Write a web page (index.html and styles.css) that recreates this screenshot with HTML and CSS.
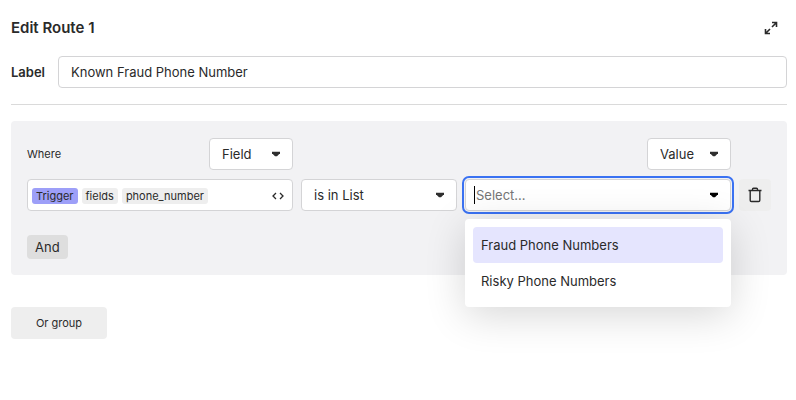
FILE: index.html
```html
<!DOCTYPE html>
<html lang="en">
<head>
<meta charset="utf-8">
<title>Edit Route 1</title>
<link rel="stylesheet" href="styles.css">
</head>
<body>
<main class="editor">
  <header class="header">
    <h1 class="title">Edit Route 1</h1>
    <button class="expand" type="button" aria-label="Expand">
      <svg width="14" height="14" viewBox="0 0 14 14" fill="none" stroke="currentColor" stroke-width="1.6"><path d="M8 1.5h4.5V6M12.5 1.5 8 6M1.5 8v4.5H6M1.5 12.5 6 8"/></svg>
    </button>
  </header>

  <div class="label-row">
    <label class="label" for="route-label">Label</label>
    <input class="box text-input" id="route-label" type="text" value="Known Fraud Phone Number">
  </div>

  <hr class="divider">

  <section class="group">
    <div class="conditions">
      <div class="source source-left">
        <span class="where">Where</span>
        <div class="picker short">
          <select class="box" aria-label="Left operand type"><option>Field</option></select>
          <svg class="arrow" width="8" height="6" viewBox="0 0 8 6"><path d="M0 0.8h8v1.4L5 5.2H3L0 2.2z"/></svg>
        </div>
      </div>
      <div class="source source-right">
        <div class="picker short">
          <select class="box" aria-label="Right operand type"><option>Value</option></select>
          <svg class="arrow" width="8" height="6" viewBox="0 0 8 6"><path d="M0 0.8h8v1.4L5 5.2H3L0 2.2z"/></svg>
        </div>
      </div>

      <div class="box tokens">
        <span class="token token-trigger">Trigger</span>
        <span class="token">fields</span>
        <span class="token">phone_number</span>
        <button class="code" type="button" aria-label="Edit as code">
          <svg width="12" height="8" viewBox="0 0 12 8" fill="none" stroke="currentColor" stroke-width="1.3"><path d="M4 1 1 4l3 3M8 1l3 3-3 3"/></svg>
        </button>
      </div>
      <div class="picker">
        <select class="box" aria-label="Operator"><option>is in List</option></select>
        <svg class="arrow" width="8" height="6" viewBox="0 0 8 6"><path d="M0 0.8h8v1.4L5 5.2H3L0 2.2z"/></svg>
      </div>
      <div class="picker combo">
        <input class="box" type="text" placeholder="Select..." role="combobox" aria-label="List" aria-expanded="true" aria-controls="lists">
        <svg class="arrow" width="8" height="6" viewBox="0 0 8 6"><path d="M0 0.8h8v1.4L5 5.2H3L0 2.2z"/></svg>
        <ul class="menu" id="lists" role="listbox">
          <li class="option active" role="option" aria-selected="true">Fraud Phone Numbers</li>
          <li class="option" role="option" aria-selected="false">Risky Phone Numbers</li>
        </ul>
      </div>
      <button class="delete" type="button" aria-label="Delete condition">
        <svg width="14" height="16" viewBox="0 0 14 16" fill="none" stroke="currentColor" stroke-width="1.4"><path d="M0.5 3.5h13M4.5 3.5V2.2a1 1 0 0 1 1-1h3a1 1 0 0 1 1 1v1.3M2.2 3.5v9.8a1.2 1.2 0 0 0 1.2 1.2h7.2a1.2 1.2 0 0 0 1.2-1.2V3.5"/></svg>
      </button>
    </div>
    <button class="and" type="button">And</button>
  </section>

  <button class="or-group" type="button">Or group</button>
</main>
</body>
</html>
```
FILE: styles.css
```css
* {
  box-sizing: border-box;
}

body {
  margin: 0;
  background: #fff;
  color: #2a2a2a;
  font: 13px/20px Inter, "Liberation Sans", sans-serif;
}

button,
input,
select {
  margin: 0;
  border: 0;
  color: inherit;
  font: inherit;
}

button {
  display: flex;
  align-items: center;
  justify-content: center;
  padding: 0;
  background: none;
}

.editor {
  padding: 16px 9px 16px 11px;
}

.header {
  display: flex;
  align-items: center;
  justify-content: space-between;
  margin-bottom: 16px;
}

.title {
  margin: 0;
  font-size: 15px;
  line-height: 24px;
  font-weight: 600;
}

.expand {
  width: 32px;
  height: 24px;
}

.label-row {
  display: flex;
  align-items: center;
  gap: 12px;
}

.label {
  min-width: 35px;
  font-weight: 600;
}

.box {
  width: 100%;
  height: 32px;
  padding: 0 12px;
  border: 1px solid #d4d4d6;
  border-radius: 4px;
  background: #fff;
}

.text-input {
  flex: 1;
  min-width: 0;
}

.divider {
  margin: 16px 0;
  border: 0;
  border-top: 1px solid #dadada;
}

.group {
  padding: 17px 16px 16px;
  border-radius: 4px;
  background: #f2f2f4;
}

.conditions {
  display: grid;
  grid-template-columns: 1fr 156px 1fr 32px;
  gap: 9px 8px;
}

.source {
  display: flex;
  align-items: center;
  justify-content: space-between;
}

.source-right {
  grid-column: 3;
  justify-content: flex-end;
}

.where {
  font-size: 11px;
}

.picker {
  position: relative;
}

.short {
  width: 84px;
}

.picker select {
  appearance: none;
}

.arrow {
  position: absolute;
  top: 13px;
  right: 13px;
  fill: #2e2e2e;
  pointer-events: none;
}

.source-left,
.tokens {
  grid-column: 1;
}

.tokens {
  display: flex;
  align-items: center;
  gap: 4px;
  padding: 2px 8px 0 4px;
}

.token {
  padding: 0 4px;
  border-radius: 3px;
  background: #eee;
  font-size: 11px;
  line-height: 16px;
}

.token-trigger {
  background: #9d9ff8;
}

.code {
  width: 12px;
  height: 24px;
  margin-left: auto;
}

.combo .box {
  padding-left: 10px;
  outline: 2px solid #3b72f2;
  outline-offset: 1px;
}

.combo .box::placeholder {
  color: #757575;
  opacity: 1;
}

.combo .arrow {
  fill: #000;
}

.combo::before {
  content: "";
  position: absolute;
  top: 7px;
  left: 9px;
  width: 1px;
  height: 18px;
  background: #000;
}

.menu {
  position: absolute;
  top: 40px;
  left: 0;
  right: 0;
  margin: 0;
  padding: 8px;
  border-radius: 4px;
  background: #fff;
  box-shadow: 0 8px 40px rgba(0, 0, 0, 0.16);
  list-style: none;
}

.option {
  padding: 8px;
  border-radius: 4px;
}

.option.active {
  background: #e5e5fe;
}

.delete {
  height: 32px;
  border-radius: 4px;
  background: #eee;
}

.and {
  height: 24px;
  margin-top: 24px;
  padding: 0 8px;
  border-radius: 4px;
  background: #dedede;
}

.or-group {
  min-width: 96px;
  height: 32px;
  margin-top: 32px;
  padding: 0 24px;
  border-radius: 4px;
  background: #eee;
  font-size: 11px;
}
```
